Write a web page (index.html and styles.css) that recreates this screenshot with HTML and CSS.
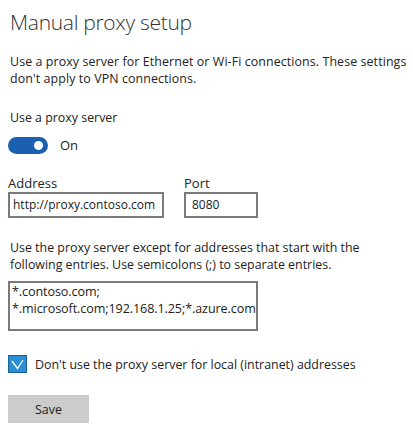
FILE: index.html
```html
<!DOCTYPE html>
<html lang="en">
  <head>
    <meta charset="UTF-8" />
    <meta name="viewport" content="width=device-width, initial-scale=1.0" />
    <title>Manual proxy setup</title>
    <link rel="stylesheet" href="styles.css">
  </head>
  <body>
    <div class="page">
      <h1>Manual proxy setup</h1>
      <p class="intro">Use a proxy server for Ethernet or Wi-Fi connections. These settings don't apply to VPN connections.</p>

      <div class="label">Use a proxy server</div>
      <div class="toggle_row">
        <span class="toggle"><span class="knob"></span></span>
        <span>On</span>
      </div>

      <div class="fields">
        <div class="field">
          <label>Address</label>
          <div class="box address">http://proxy.contoso.com</div>
        </div>
        <div class="field">
          <label>Port</label>
          <div class="box port">8080</div>
        </div>
      </div>

      <p class="except">Use the proxy server except for addresses that start with the following entries. Use semicolons (;) to separate entries.</p>
      <div class="box area">*.contoso.com;<br>*.microsoft.com;192.168.1.25;*.azure.com</div>

      <div class="check_row">
        <span class="check">
          <svg width="13" height="11" viewBox="0 0 13 11"><path d="M1 2 L6.5 9.5 L12 1" fill="none" stroke="#fff" stroke-width="1.3"/></svg>
        </span>
        <span>Don't use the proxy server for local (intranet) addresses</span>
      </div>

      <button class="btn">Save</button>
    </div>
  </body>
</html>
```

FILE: styles.css
```css
* {
    margin: 0;
    padding: 0;
    box-sizing: border-box;
}

body {
    background: #fff;
    font-family: "Open Sans", sans-serif;
    color: #222;
}

.page {
    padding: 7px 2px 0 10px;
}

h1 {
    font-weight: 300;
    font-size: 21px;
    line-height: 30px;
    color: #333;
    letter-spacing: -0.3px;
}

.intro {
    margin-top: 16px;
    font-size: 12.4px;
    line-height: 17px;
    letter-spacing: 0.1px;
}

.label {
    margin-top: 22px;
    font-size: 12.4px;
    line-height: 17px;
}

.toggle_row {
    display: flex;
    align-items: center;
    gap: 12px;
    margin: 10px 0 0 -2px;
    font-size: 13px;
}

.toggle {
    width: 40px;
    height: 17px;
    border-radius: 9px;
    background: #1a5fb0;
    display: flex;
    align-items: center;
    justify-content: flex-end;
    padding-right: 5px;
}

.knob {
    width: 9px;
    height: 9px;
    border-radius: 50%;
    background: #fff;
}

.fields {
    display: flex;
    gap: 20px;
    margin: 20px 0 0 -2px;
}

.field label {
    display: block;
    font-size: 13px;
    line-height: 18px;
}

.box {
    border: 2px solid #7a7a7a;
    font-size: 12px;
    padding: 0 3px;
    color: #222;
}

.address {
    width: 156px;
    height: 26px;
    line-height: 22px;
}

.port {
    width: 74px;
    height: 26px;
    line-height: 22px;
    padding-left: 6px;
}

.except {
    margin-top: 21px;
    font-size: 12.4px;
    line-height: 17px;
    width: 380px;
}

.area {
    margin: 8px 0 0 -2px;
    width: 250px;
    height: 50px;
    line-height: 17px;
    padding: 0 2px;
    font-size: 12.6px;
    letter-spacing: -0.1px;
}

.check_row {
    display: flex;
    align-items: center;
    gap: 8px;
    margin: 24px 0 0 -2px;
    font-size: 12.4px;
}

.check {
    width: 19px;
    height: 18px;
    background: #2a8fd6;
    border: 1px solid #1a5f9a;
    display: flex;
    align-items: center;
    justify-content: center;
}

.btn {
    margin: 22px 0 0 -2px;
    width: 81px;
    height: 28px;
    border: none;
    background: #cccccc;
    font-family: "Open Sans", sans-serif;
    font-size: 12.4px;
    color: #222;
}
```
